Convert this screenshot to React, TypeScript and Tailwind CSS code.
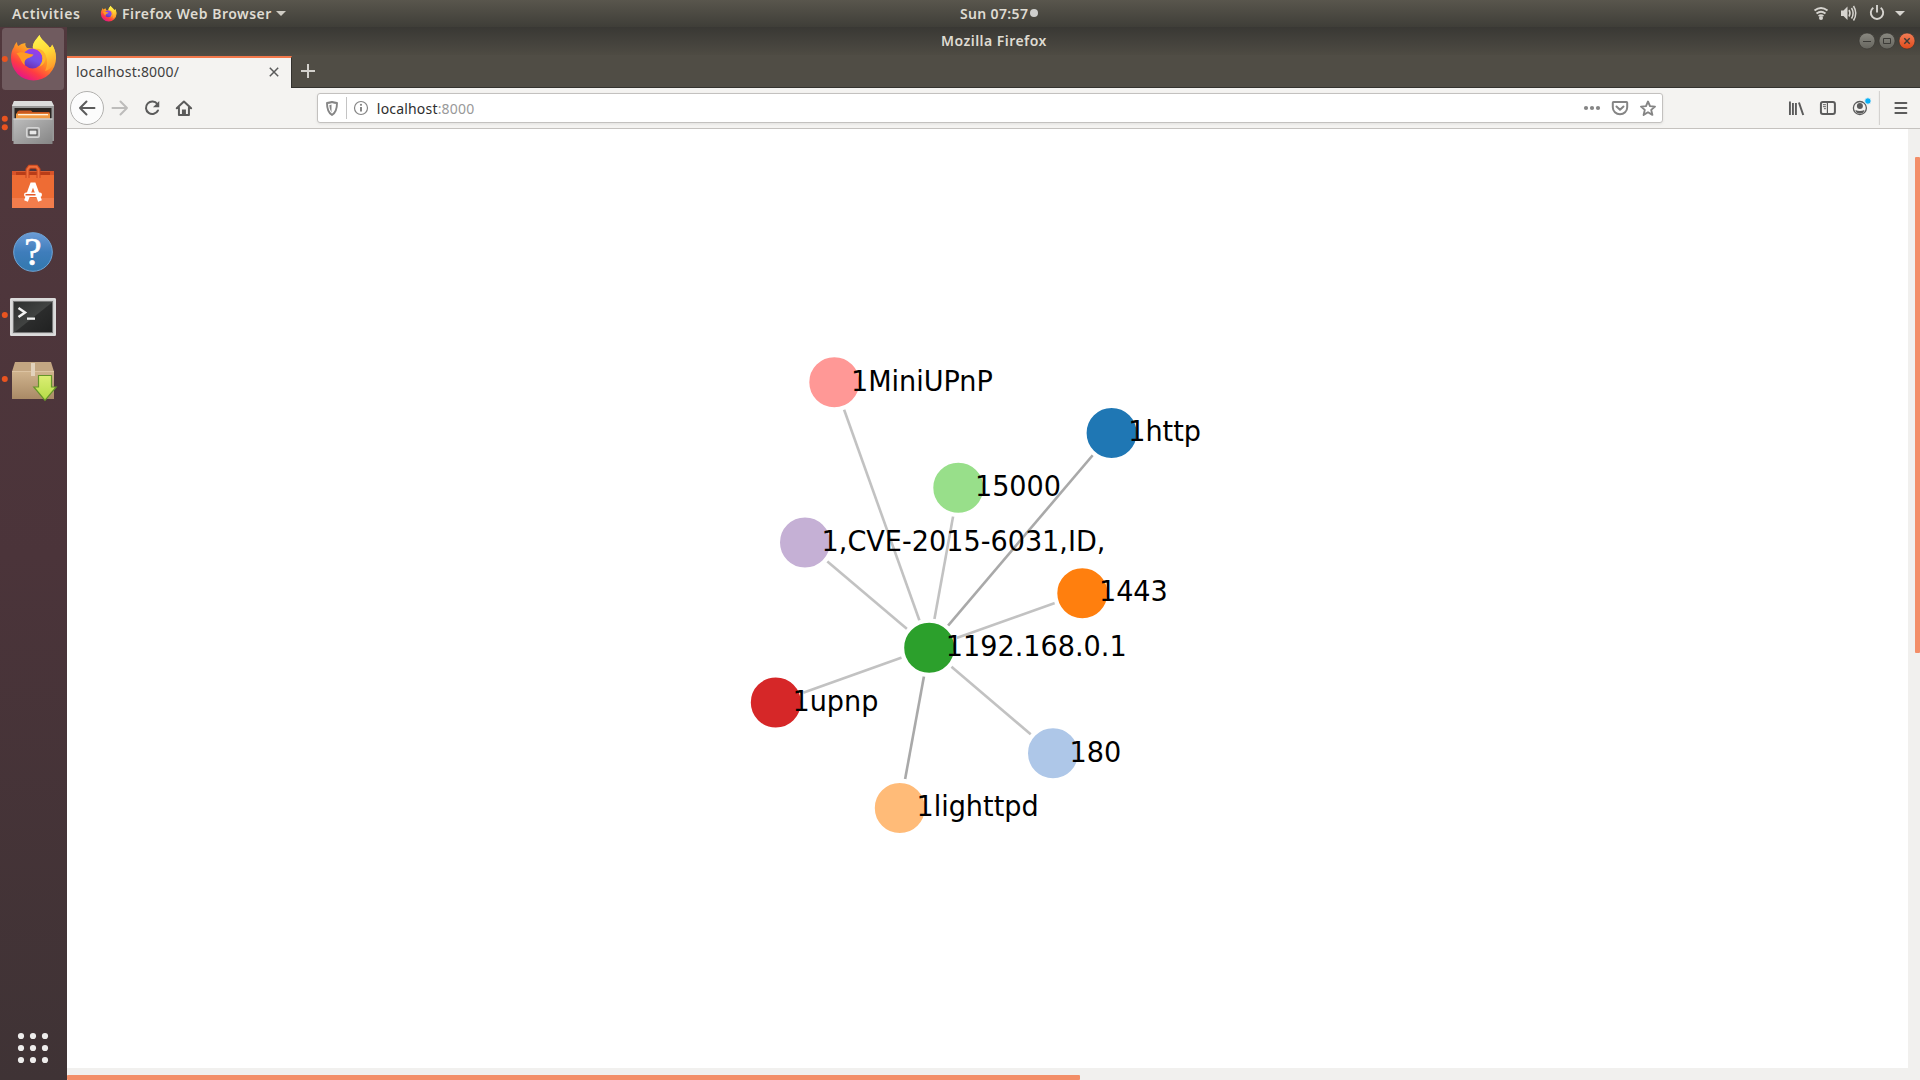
import React from "react";

type GraphNode = { label: string; x: number; y: number; color: string };

const hub: GraphNode = { label: "1192.168.0.1", x: 929.2, y: 647.8, color: "#2ca02c" };

const leaves: (GraphNode & { stroke: string })[] = [
  { label: "1MiniUPnP", x: 834.3, y: 382.3, color: "#ff9896", stroke: "#c2c2c2" },
  { label: "1http", x: 1111.6, y: 433, color: "#1f77b4", stroke: "#a9a9a9" },
  { label: "15000", x: 958.3, y: 487.8, color: "#98df8a", stroke: "#c2c2c2" },
  { label: "1,CVE-2015-6031,ID,", x: 805, y: 542.5, color: "#c5b0d5", stroke: "#c2c2c2" },
  { label: "1443", x: 1082.3, y: 593.2, color: "#ff7f0e", stroke: "#c2c2c2" },
  { label: "1upnp", x: 775.8, y: 702.5, color: "#d62728", stroke: "#c2c2c2" },
  { label: "180", x: 1053, y: 753.3, color: "#aec7e8", stroke: "#c2c2c2" },
  { label: "1lighttpd", x: 899.8, y: 808, color: "#ffbb78", stroke: "#a9a9a9" },
];

function Graph() {
  return (
    <svg className="block h-[939px] w-[1841px]" viewBox="67 129 1841 939">
      {leaves.map((n) => (
        <line key={n.label} x1={hub.x} y1={hub.y} x2={n.x} y2={n.y} stroke={n.stroke} strokeWidth="2.6" />
      ))}
      {[hub, ...leaves].map((n) => (
        <g key={n.label}>
          <circle cx={n.x} cy={n.y} r="27.2" fill={n.color} stroke="#fff" strokeWidth="4.4" />
          <text transform={`translate(${n.x + 16.6} ${n.y + 8.2}) scale(1 1.04)`} fontSize="27.1" fill="#000" fontFamily="'DejaVu Sans', sans-serif">
            {n.label}
          </text>
        </g>
      ))}
    </svg>
  );
}

function FirefoxShape({ id }: { id: string }) {
  return (
    <>
      <defs>
        <linearGradient id={id + "a"} x1="0.85" y1="0.1" x2="0.3" y2="1">
          <stop offset="0" stopColor="#fff04a" />
          <stop offset="0.25" stopColor="#ffc42c" />
          <stop offset="0.5" stopColor="#ff8a25" />
          <stop offset="0.75" stopColor="#ff3d42" />
          <stop offset="1" stopColor="#e3128d" />
        </linearGradient>
        <linearGradient id={id + "b"} x1="0.7" y1="0" x2="0.3" y2="1">
          <stop offset="0" stopColor="#a338e8" />
          <stop offset="0.55" stopColor="#7052e8" />
          <stop offset="1" stopColor="#6a2eb0" />
        </linearGradient>
        <linearGradient id={id + "c"} x1="0.3" y1="0" x2="0.6" y2="1">
          <stop offset="0" stopColor="#fff44f" />
          <stop offset="0.5" stopColor="#ffd936" />
          <stop offset="1" stopColor="#ff9a2c" />
        </linearGradient>
      </defs>
      <path
        d="M11 58C11 53 12 50 14 47C14.500 45 15.500 43 17 42C17 44 17.500 45.500 18.500 46C20 44.500 22.500 43.300 25.500 43C25 44.500 25.500 46.500 27 48L33 48.500C32 43 36 40 39.500 35C41 40 46 42 49.500 47.500C51 47.500 52 46 52 44.500C54.500 48 56 53 56 58A22.500 22.500 0 0 1 11 58z"
        fill={`url(#${id}a)`}
      />
      <path
        d="M33 49C32 43 36 40 39.500 35C41 40 46 42 49.500 47.500C51 47.500 52 46 52 44.500C54.500 48 56 53 55.500 58C55 65 50 70 45 71C48 65 48 58 44 53C41 50 37 49 33 49z"
        fill={`url(#${id}c)`}
      />
      <circle cx="32.500" cy="58.500" r="10" fill={`url(#${id}b)`} />
      <path d="M16.500 53.500C20 51.500 23.500 52 26 53C28.500 54 31 54 33.500 54.500C32 57.500 28.500 57.500 26.500 59C24 61 24.500 63.500 25 65C21 63 21.500 58.500 16.500 53.500z" fill="#ff9b22" />
      <path d="M34 49C40 50 42.500 54.500 42.500 58.500C42.500 62 41 65 39 67C44 65 46.500 60 45.500 55C44 50.500 40 48 34 49z" fill="#ffb32e" />
    </>
  );
}

function TopBar() {
  return (
    <header className="flex h-[27px] shrink-0 items-center justify-between bg-linear-to-b from-[#59564d] to-[#3f3e38] font-['Noto_Sans',sans-serif] text-[14px] font-semibold text-[#dfdbd2]">
      <div className="flex h-full w-[600px] items-center">
        <span className="w-[88px] pl-3 tracking-[0.6px]">Activities</span>
        <svg className="mr-[6px] ml-[12px] h-[17px] w-[17px]" viewBox="9 33 48 49">
          <FirefoxShape id="s" />
        </svg>
        <span className="-ml-px whitespace-nowrap tracking-[0.5px]">Firefox Web Browser</span>
        <svg className="ml-[4px] h-[5px] w-[10px]" viewBox="0 0 10 5">
          <path d="M0 0h10L5 5z" fill="#cfccc4" />
        </svg>
      </div>
      <div className="flex h-full w-[160px] items-center gap-[2px] whitespace-nowrap pl-[80px] tracking-[0.35px]">
        <span className="-mt-px">Sun 07:57</span>
        <span className="-mt-px h-2 w-2 shrink-0 rounded-full bg-[#cfcfcd]" />
      </div>
      <div className="flex h-full w-[600px] justify-end">
        <svg className="h-[27px] w-[110px]" viewBox="1810 0 110 27" fill="none" stroke="#d6d4cf">
          <path d="M1814.500 10.500q6.500-5 13 0" strokeWidth="2" />
          <path d="M1816.500 13.500q4.500-3.500 9 0" strokeWidth="1.800" />
          <path d="M1818.500 16q2.500-1.800 5 0" strokeWidth="1.600" />
          <circle cx="1821" cy="18" r="2" fill="#d6d4cf" stroke="none" />
          <path d="M1841 10.500h2.500l4-4v13.500l-4-4h-2.500z" fill="#d6d4cf" stroke="none" />
          <path d="M1849 10q2 3.200 0 6.500M1851.500 8q3.300 5.200 0 10.500M1853.500 6q4.500 7.200 0 14.500" strokeWidth="1.500" />
          <path d="M1873.300 7.800a6.200 6.200 0 1 0 7.400 0M1877 5v7.500" strokeWidth="1.900" />
          <path d="M1895 11h10l-5 5z" fill="#d6d4cf" stroke="none" />
        </svg>
      </div>
    </header>
  );
}

function Pip({ y }: { y: number }) {
  return <circle cx="4.800" cy={y} r="3" fill="#e95420" />;
}

function Dock() {
  return (
    <aside className="flex w-[67px] shrink-0 flex-col justify-between bg-linear-to-b from-[#51383d] via-[#4b343a] to-[#3f3335]">
      <div className="flex flex-col">
        <svg className="h-[64px] w-[67px]" viewBox="0 27 67 64">
          <rect x="2" y="28" width="62" height="62" rx="3.500" fill="#705b5f" />
          <FirefoxShape id="d" />
          <Pip y={59} />
        </svg>
        <svg className="h-[64px] w-[67px]" viewBox="0 91 67 64">
          <defs>
            <linearGradient id="cab" x1="0" y1="0" x2="1" y2="1">
              <stop offset="0" stopColor="#bdbdbd" />
              <stop offset="1" stopColor="#858585" />
            </linearGradient>
          </defs>
          <Pip y={118.700} />
          <Pip y={127.200} />
          <path d="M14 101h37.500l2.500 5v35H12v-35z" fill="#999" />
          <path d="M14 101h37.500l2.500 5H12z" fill="#dcdcdc" />
          <rect x="14.500" y="108" width="37" height="13" fill="#2a2522" />
          <path d="M17 112l2-1.500h12l1.500 1.500h17v7H17z" fill="#c95820" />
          <rect x="16" y="113.500" width="34" height="5.500" fill="#f19a43" />
          <rect x="18" y="114" width="30" height="1.300" fill="#fff2df" />
          <rect x="13.500" y="118.500" width="39" height="25.500" fill="url(#cab)" />
          <rect x="13.500" y="118.500" width="39" height="1" fill="#ddd" />
          <rect x="26.700" y="127.700" width="12.500" height="9.500" rx="1.500" fill="#a8a8a8" stroke="#d5d5d5" strokeWidth="1.500" />
          <rect x="29" y="130" width="8" height="5" fill="#e8e8e8" stroke="#454545" />
        </svg>
        <svg className="h-[65px] w-[67px]" viewBox="0 155 67 65">
          <path d="M12 171h42v37H12z" fill="#f37d4c" />
          <path d="M16 171.500h34v4H16z" fill="#b93d18" />
          <path d="M12 171h4v4h-4zM50 171h4v4h-4z" fill="#d9542a" />
          <path d="M12 175h42v23H12z" fill="#ee6c34" />
          <path d="M27.500 178v-8.500l2-2.700h7l2 2.700v8.500" fill="none" stroke="#c9471e" strokeWidth="4" />
          <path d="M27.500 178v-8.500l2-2.700h7l2 2.700v8.500" fill="none" stroke="#f0703c" strokeWidth="2" />
          <path d="M26 201l6-16.500h2l6 16.500" fill="none" stroke="#fff" strokeWidth="4" />
          <rect x="24" y="192.500" width="18" height="4.500" rx="2.200" fill="#fff" />
          <rect x="25.500" y="194" width="10" height="1.500" fill="#e45a2a" />
        </svg>
        <svg className="h-[64px] w-[67px]" viewBox="0 220 67 64">
          <defs>
            <linearGradient id="help" x1="0" y1="0" x2="0" y2="1">
              <stop offset="0" stopColor="#6b9bd6" />
              <stop offset="0.5" stopColor="#3f7dbb" />
              <stop offset="1" stopColor="#3278ae" />
            </linearGradient>
          </defs>
          <circle cx="33" cy="252" r="19.300" fill="url(#help)" stroke="#6fa5d6" strokeWidth="1" />
          <text x="33" y="265" textAnchor="middle" fontSize="39" fill="#fff" stroke="#fff" strokeWidth=".6" fontFamily="'Liberation Serif', serif">?</text>
        </svg>
        <svg className="h-[66px] w-[67px]" viewBox="0 284 67 66">
          <defs>
            <linearGradient id="term" x1="0" y1="0" x2="1" y2="1">
              <stop offset="0" stopColor="#2d2f2e" />
              <stop offset="0.5" stopColor="#414342" />
              <stop offset="0.52" stopColor="#2b2c2c" />
              <stop offset="1" stopColor="#202121" />
            </linearGradient>
          </defs>
          <Pip y={315} />
          <rect x="10" y="298" width="46" height="38" rx="1.500" fill="#d0d0d0" />
          <rect x="11" y="299" width="44" height="36" fill="none" stroke="#e6e6e6" />
          <rect x="13.500" y="301.500" width="39" height="31" fill="url(#term)" stroke="#777" />
          <path d="M18.500 308l6.500 4.500-6.500 4.500" fill="none" stroke="#f2f2f2" strokeWidth="2.500" />
          <rect x="27" y="317.500" width="8" height="2.300" fill="#f2f2f2" />
        </svg>
        <svg className="h-[64px] w-[67px]" viewBox="0 350 67 64">
          <defs>
            <linearGradient id="box" x1="0" y1="0" x2="0" y2="1">
              <stop offset="0" stopColor="#d0b48e" />
              <stop offset="1" stopColor="#a98a66" />
            </linearGradient>
            <linearGradient id="arrow" x1="0" y1="0" x2="0" y2="1">
              <stop offset="0" stopColor="#dcee74" />
              <stop offset="1" stopColor="#b4dc46" />
            </linearGradient>
          </defs>
          <Pip y={379} />
          <path d="M12 371h42v28H12z" fill="url(#box)" />
          <path d="M15 362h36l3 9.500H12z" fill="#c3a682" />
          <path d="M12 371.500h42" stroke="#dcc3a2" strokeWidth="1" />
          <path d="M31 363h4v13h-4z" fill="#e2d2bc" />
          <path d="M38.500 375.500h13v11.500h4.700L45 400.300 33.800 387h4.700z" fill="url(#arrow)" stroke="#64952a" strokeWidth="1.200" />
        </svg>
      </div>
      <svg className="h-[64px] w-[67px]" viewBox="0 1016 67 64" fill="#eeedec">
        {[1036, 1048, 1060].map((y) => [21, 33, 45].map((x) => <circle key={x + "-" + y} cx={x} cy={y} r="3.100" />))}
      </svg>
    </aside>
  );
}

function WindowButtons() {
  return (
    <svg className="h-[28px] w-[70px]" viewBox="1850 27 70 28" fill="none">
      <defs>
        <linearGradient id="gb" x1="0" y1="0" x2="0" y2="1">
          <stop offset="0" stopColor="#8a8981" />
          <stop offset="1" stopColor="#66655e" />
        </linearGradient>
        <linearGradient id="ob" x1="0" y1="0" x2="0" y2="1">
          <stop offset="0" stopColor="#f37e57" />
          <stop offset="1" stopColor="#e04a1a" />
        </linearGradient>
      </defs>
      <circle cx="1867" cy="41" r="8" fill="url(#gb)" stroke="#35342f" strokeWidth=".6" />
      <circle cx="1887" cy="41" r="8" fill="url(#gb)" stroke="#35342f" strokeWidth=".6" />
      <circle cx="1907" cy="41" r="8" fill="url(#ob)" stroke="#35342f" strokeWidth=".6" />
      <path d="M1863 41.500h8M1883.500 38.500h7v5h-7z" stroke="#3c3b37" />
      <path d="M1904.300 38.300l5.400 5.400m0-5.400l-5.400 5.400" stroke="#3c3b37" strokeWidth="1.400" />
    </svg>
  );
}

function TitleAndTabs() {
  return (
    <>
      <div className="flex h-[28px] shrink-0 items-center justify-between bg-linear-to-b from-[#393834] to-[#4e4b43]">
        <span className="w-[70px]" />
        <span className="-mt-[1px] pl-[1px] font-['Noto_Sans',sans-serif] text-[14px] font-semibold tracking-[0.46px] text-[#dfdbd2]">Mozilla Firefox</span>
        <WindowButtons />
      </div>
      <div className="flex h-[33px] shrink-0 border-b border-[#33322e] bg-[#504d45]">
        <div className="mt-px -mb-px flex w-[225px] items-center justify-between border-t-2 border-r border-t-[#f2784b] border-r-[#33322e] bg-[#f4f3f1] pr-[12px] pl-[9px]">
          <span className="-mt-[4px] font-['Noto_Sans',sans-serif] text-[14px] tracking-[0.2px] text-[#3f3f3f]">localhost:8000/</span>
          <svg className="-mt-[2px] h-[10px] w-[10px]" viewBox="0 0 10 10">
            <path d="M.8 .8l8.400 8.400m0-8.400L.8 9.200" stroke="#5a5a5a" strokeWidth="1.500" />
          </svg>
        </div>
        <svg className="mt-[9px] ml-[9px] h-[14px] w-[14px]" viewBox="0 0 14 14">
          <path d="M7 0v14M0 7h14" stroke="#d3d1cc" strokeWidth="2" />
        </svg>
      </div>
    </>
  );
}

function NavBar() {
  return (
    <div className="flex h-[41px] shrink-0 items-center justify-between border-b border-[#c5c2bf] bg-[#f4f3f1]">
      <svg className="h-[40px] w-[250px]" viewBox="67 88 250 40" fill="none" stroke="#5b5b5b" strokeWidth="2">
        <circle cx="87" cy="108" r="16.500" fill="#fcfcfc" stroke="#b1b0ae" strokeWidth="1" />
        <path d="M94.500 108H80M86.500 101.500L80 108l6.500 6.500" strokeLinecap="round" strokeLinejoin="round" />
        <path d="M112.500 108H127M120.500 101.500l6.500 6.500-6.500 6.500" stroke="#bdbcbb" strokeLinecap="round" strokeLinejoin="round" />
        <path d="M157.400 104a6.300 6.300 0 1 0 .6 6.500" strokeLinecap="round" />
        <path d="M159.300 101v6.300H153z" fill="#5b5b5b" stroke="none" />
        <path d="M176.800 108.300l7.200-6.800 7.200 6.800M179 107.500v7.500h10v-7.500" strokeLinejoin="round" strokeLinecap="round" />
        <path d="M182 116v-6.500h4V116z" fill="#5b5b5b" stroke="none" />
      </svg>
      <div className="flex h-[30px] w-[1347px] items-center justify-between rounded-[3px] border border-[#c3c1bf] bg-white shadow-[0_1px_3px_rgba(0,0,0,0.08)]">
        <div className="flex items-center">
          <svg className="h-[28px] w-[60px]" viewBox="318 94 60 28" fill="none" stroke="#858585">
            <path d="M332 102q-2.500.8-5 1 0 9 5 12 5-3 5-12-2.500-.2-5-1z" strokeWidth="1.900" strokeLinejoin="round" />
            <path d="M331.500 104.500v8q-2-2.500-2.200-7.200z" fill="#858585" stroke="none" />
            <path d="M346.500 97v22" stroke="#c4c4c4" />
            <circle cx="361" cy="108" r="6.500" strokeWidth="1.200" />
            <path d="M361 107v4.500" strokeWidth="2" />
            <circle cx="361" cy="104.800" r="1.100" fill="#858585" stroke="none" />
          </svg>
          <span className="-ml-[1px] font-['Noto_Sans',sans-serif] text-[14px] tracking-[0.18px] text-[#2e2e2e]">
            localhost<span className="text-[#999]">:8000</span>
          </span>
        </div>
        <svg className="h-[28px] w-[84px]" viewBox="1578 94 84 28" fill="none" stroke="#858585" strokeWidth="2">
          <g fill="#858585" stroke="none">
            <circle cx="1586" cy="108" r="2.100" />
            <circle cx="1592" cy="108" r="2.100" />
            <circle cx="1598" cy="108" r="2.100" />
          </g>
          <path d="M1613.500 102h13q.7 0 .7.800v4.500a7.200 7 0 0 1-14.400 0v-4.500q0-.8.700-.8z" />
          <path d="M1616.500 106.500l3.500 3.300 3.500-3.300" strokeLinecap="round" strokeLinejoin="round" />
          <path d="M1648 101.500l2 4.600 5 .5-3.800 3.300 1.200 5-4.400-2.700-4.400 2.700 1.200-5-3.800-3.300 5-.5z" strokeWidth="1.900" strokeLinejoin="round" />
        </svg>
      </div>
      <svg className="h-[40px] w-[257px]" viewBox="1663 88 257 40" fill="none" stroke="#5b5b5b" strokeWidth="2">
        <path d="M1790 101.500V115M1793 103v12M1796 103v12" strokeWidth="1.900" />
        <path d="M1799 102.500l4.300 12.500" strokeWidth="2" />
        <rect x="1821" y="102" width="14" height="12" rx="2" />
        <path d="M1827.500 102v12" strokeWidth="1.200" />
        <path d="M1823 104.700h3M1823 106.700h3M1824 108.700h2" strokeWidth="1" />
        <circle cx="1860" cy="108" r="6.500" strokeWidth="1.300" />
        <circle cx="1860" cy="106" r="3" fill="#5b5b5b" stroke="none" />
        <path d="M1855.500 110q4.500 2 9 0-.5 3.500-4.500 3.500t-4.500-3.500z" fill="#5b5b5b" stroke="none" />
        <circle cx="1868" cy="101" r="3.200" fill="#0ab0f5" stroke="#f4f3f1" strokeWidth=".8" />
        <path d="M1879.500 91v34" stroke="#cfcdcb" strokeWidth="1" />
        <path d="M1895.500 103h11M1895.500 108h11M1895.500 113h11" strokeLinecap="round" />
      </svg>
    </div>
  );
}

export default function App() {
  return (
    <div className="flex h-[1080px] w-[1920px] flex-col overflow-hidden bg-white">
      <TopBar />
      <div className="flex min-h-0 flex-1">
        <Dock />
        <main className="flex min-w-0 flex-1 flex-col">
          <TitleAndTabs />
          <NavBar />
          <div className="flex h-[939px] shrink-0">
            <Graph />
            <div className="flex w-3 justify-end bg-[#f1f0ee] pt-7">
              <div className="h-[496px] w-[5px] rounded-[1px] bg-[#f38e68]" />
            </div>
          </div>
          <div className="flex h-3 shrink-0 items-end bg-[#f1f0ee]">
            <div className="h-[5px] w-[1013px] rounded-[1px] bg-[#f38e68]" />
          </div>
        </main>
      </div>
    </div>
  );
}
